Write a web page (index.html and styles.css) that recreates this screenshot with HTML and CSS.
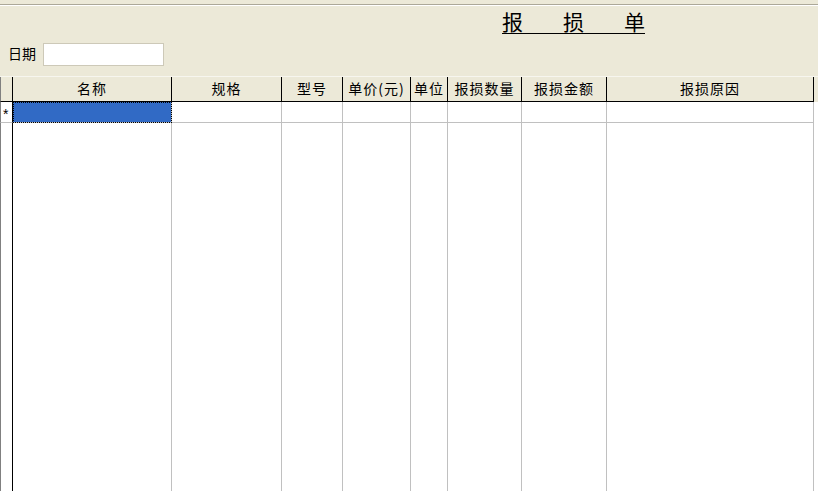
FILE: index.html
```html
<!DOCTYPE html>
<html lang="zh-CN">
<head>
    <meta charset="UTF-8">
    <title>报损单</title>
    <link rel="stylesheet" href="styles.css">
</head>
<body>
    <div class="topline"></div>

    <div class="title-row">
        <div class="title">
            <span>报</span>
            <span>损</span>
            <span>单</span>
        </div>
    </div>

    <div class="date-row">
        <label for="date">日期</label>
        <input type="text" id="date">
    </div>

    <div class="sheet">
        <!-- header -->
        <div class="hd sel"></div>
        <div class="hd">名称</div>
        <div class="hd">规格</div>
        <div class="hd">型号</div>
        <div class="hd">单价(元)</div>
        <div class="hd">单位</div>
        <div class="hd">报损数量</div>
        <div class="hd">报损金额</div>
        <div class="hd">报损原因</div>
        <div class="hd rest"></div>

        <!-- new record row -->
        <div class="cell sel">*</div>
        <div class="cell current"></div>
        <div class="cell"></div>
        <div class="cell"></div>
        <div class="cell"></div>
        <div class="cell"></div>
        <div class="cell"></div>
        <div class="cell"></div>
        <div class="cell"></div>
        <div class="cell rest"></div>

        <!-- empty space below -->
        <div class="fill sel"></div>
        <div class="fill"></div>
        <div class="fill"></div>
        <div class="fill"></div>
        <div class="fill"></div>
        <div class="fill"></div>
        <div class="fill"></div>
        <div class="fill"></div>
        <div class="fill"></div>
        <div class="fill rest"></div>
    </div>
</body>
</html>
```

FILE: styles.css
```css
html, body {
    height: 100%;
}
body {
    margin: 0;
    background-color: #ece9d8;
    font-family: "Noto Sans CJK SC", "Liberation Sans", sans-serif;
    font-size: 14px;
    color: #000;
    overflow: hidden;
}
.topline {
    height: 4px;
    border-bottom: 1px solid #aca899;
    box-shadow: 0 1px 0 #fff;
}
.title-row {
    padding-left: 502px;
    margin-top: 1px;
}
.title {
    display: inline-flex;
    gap: 40px;
    padding-top: 3px;
    line-height: 24px;
    font-size: 21px;
    border-bottom: 1px solid #000;
}
.date-row {
    display: flex;
    align-items: center;
    margin-top: 9px;
    padding-left: 8px;
    height: 23px;
}
.date-row label {
    margin-right: 7px;
    margin-top: -3px;
}
.date-row input {
    box-sizing: border-box;
    width: 121px;
    height: 23px;
    margin: 0;
    border: 1px solid #cdc9b8;
    background: #fff;
    outline: none;
}
.sheet {
    box-sizing: border-box;
    margin-top: 10px;
    height: calc(100% - 76px);
    border-top: 1px solid #f7f6ef;
    display: grid;
    grid-template-columns: 13px 159px 110px 61px 68px 37px 74px 85px 207px 1fr;
    grid-template-rows: 25px 21px 1fr;
    background: #fff;
}
.sheet > div {
    box-sizing: border-box;
}
.hd {
    background-color: #ece9d8;
    border-right: 1px solid #000;
    border-bottom: 1px solid #000;
    text-align: center;
    line-height: 23px;
    letter-spacing: 1px;
    white-space: nowrap;
}
.cell {
    border-right: 1px solid #c0c0c0;
    border-bottom: 1px solid #c0c0c0;
}
.fill {
    border-right: 1px solid #c0c0c0;
}
.sel {
    border-left: 1px solid #808080;
    border-right: 1px solid #000 !important;
    font-family: "Liberation Sans", sans-serif;
    font-size: 14px;
    line-height: 24px;
    padding-left: 2px;
}
.cell.sel {
    border-bottom-color: #c0c0c0;
}
.current {
    background-color: #316ac5;
    outline: 1px dotted #000;
    outline-offset: -1px;
}
.rest {
    border-right: none;
    border-bottom: none;
}
.cell.rest {
    border-bottom: none;
}
.hd.rest {
    border: none;
}
```
